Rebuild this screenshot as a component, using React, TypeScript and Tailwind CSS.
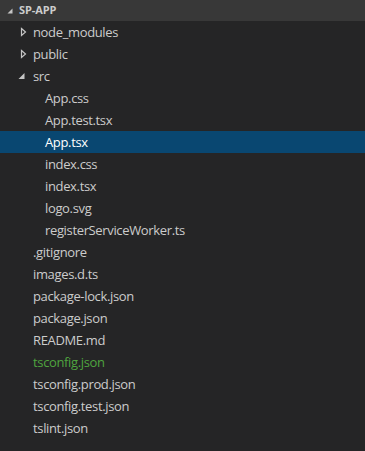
import React from "react";

type Item = { name: string; indent: number; kind?: "open" | "closed"; selected?: boolean; green?: boolean };

const items: Item[] = [
  { name: "node_modules", indent: 1, kind: "closed" },
  { name: "public", indent: 1, kind: "closed" },
  { name: "src", indent: 1, kind: "open" },
  { name: "App.css", indent: 2 },
  { name: "App.test.tsx", indent: 2 },
  { name: "App.tsx", indent: 2, selected: true },
  { name: "index.css", indent: 2 },
  { name: "index.tsx", indent: 2 },
  { name: "logo.svg", indent: 2 },
  { name: "registerServiceWorker.ts", indent: 2 },
  { name: ".gitignore", indent: 1 },
  { name: "images.d.ts", indent: 1 },
  { name: "package-lock.json", indent: 1 },
  { name: "package.json", indent: 1 },
  { name: "README.md", indent: 1 },
  { name: "tsconfig.json", indent: 1, green: true },
  { name: "tsconfig.prod.json", indent: 1 },
  { name: "tsconfig.test.json", indent: 1 },
  { name: "tslint.json", indent: 1 },
];

function OpenTri() {
  return (
    <svg width="8" height="8" viewBox="0 0 8 8" className="block">
      <path d="M6.5 1 L6.5 7 L0.5 7 Z" fill="#c5c5c5" />
    </svg>
  );
}

function ClosedTri() {
  return (
    <svg width="8" height="10" viewBox="0 0 8 10" className="block">
      <path d="M1.5 1.5 L5.5 5 L1.5 8.5 Z" fill="none" stroke="#c5c5c5" strokeWidth="1.2" strokeLinejoin="miter" />
    </svg>
  );
}

export default function App() {
  return (
    <div
      className="w-[365px] h-[451px] bg-[#252526] overflow-hidden text-[13px] text-[#cccccc]"
      style={{ fontFamily: '"Open Sans", "Noto Sans", sans-serif' }}
    >
      <div className="h-[21px] bg-[#383838] flex items-center pl-[7px]">
        <div className="w-[12px] flex items-center">
          <svg width="6" height="6" viewBox="0 0 6 6" className="block">
            <path d="M5.5 0.5 L5.5 5.5 L0.5 5.5 Z" fill="#c5c5c5" />
          </svg>
        </div>
        <span className="text-[11px] font-bold text-[#cccccc] tracking-[-0.1px]">SP-APP</span>
      </div>
      {items.map((it) => (
        <div
          key={it.name}
          className={`h-[22px] flex items-center ${it.selected ? "bg-[#094771] text-white" : ""}`}
        >
          <div className={`${it.indent === 1 ? "w-[33px]" : "w-[45px]"} shrink-0 flex items-center`}>
            {it.kind === "closed" && (
              <div className="pl-[20px]">
                <ClosedTri />
              </div>
            )}
            {it.kind === "open" && (
              <div className="pl-[18px]">
                <OpenTri />
              </div>
            )}
          </div>
          <span className={`tracking-[-0.35px] leading-none ${it.green ? "text-[#4fa43f]" : ""}`}>{it.name}</span>
        </div>
      ))}
    </div>
  );
}
